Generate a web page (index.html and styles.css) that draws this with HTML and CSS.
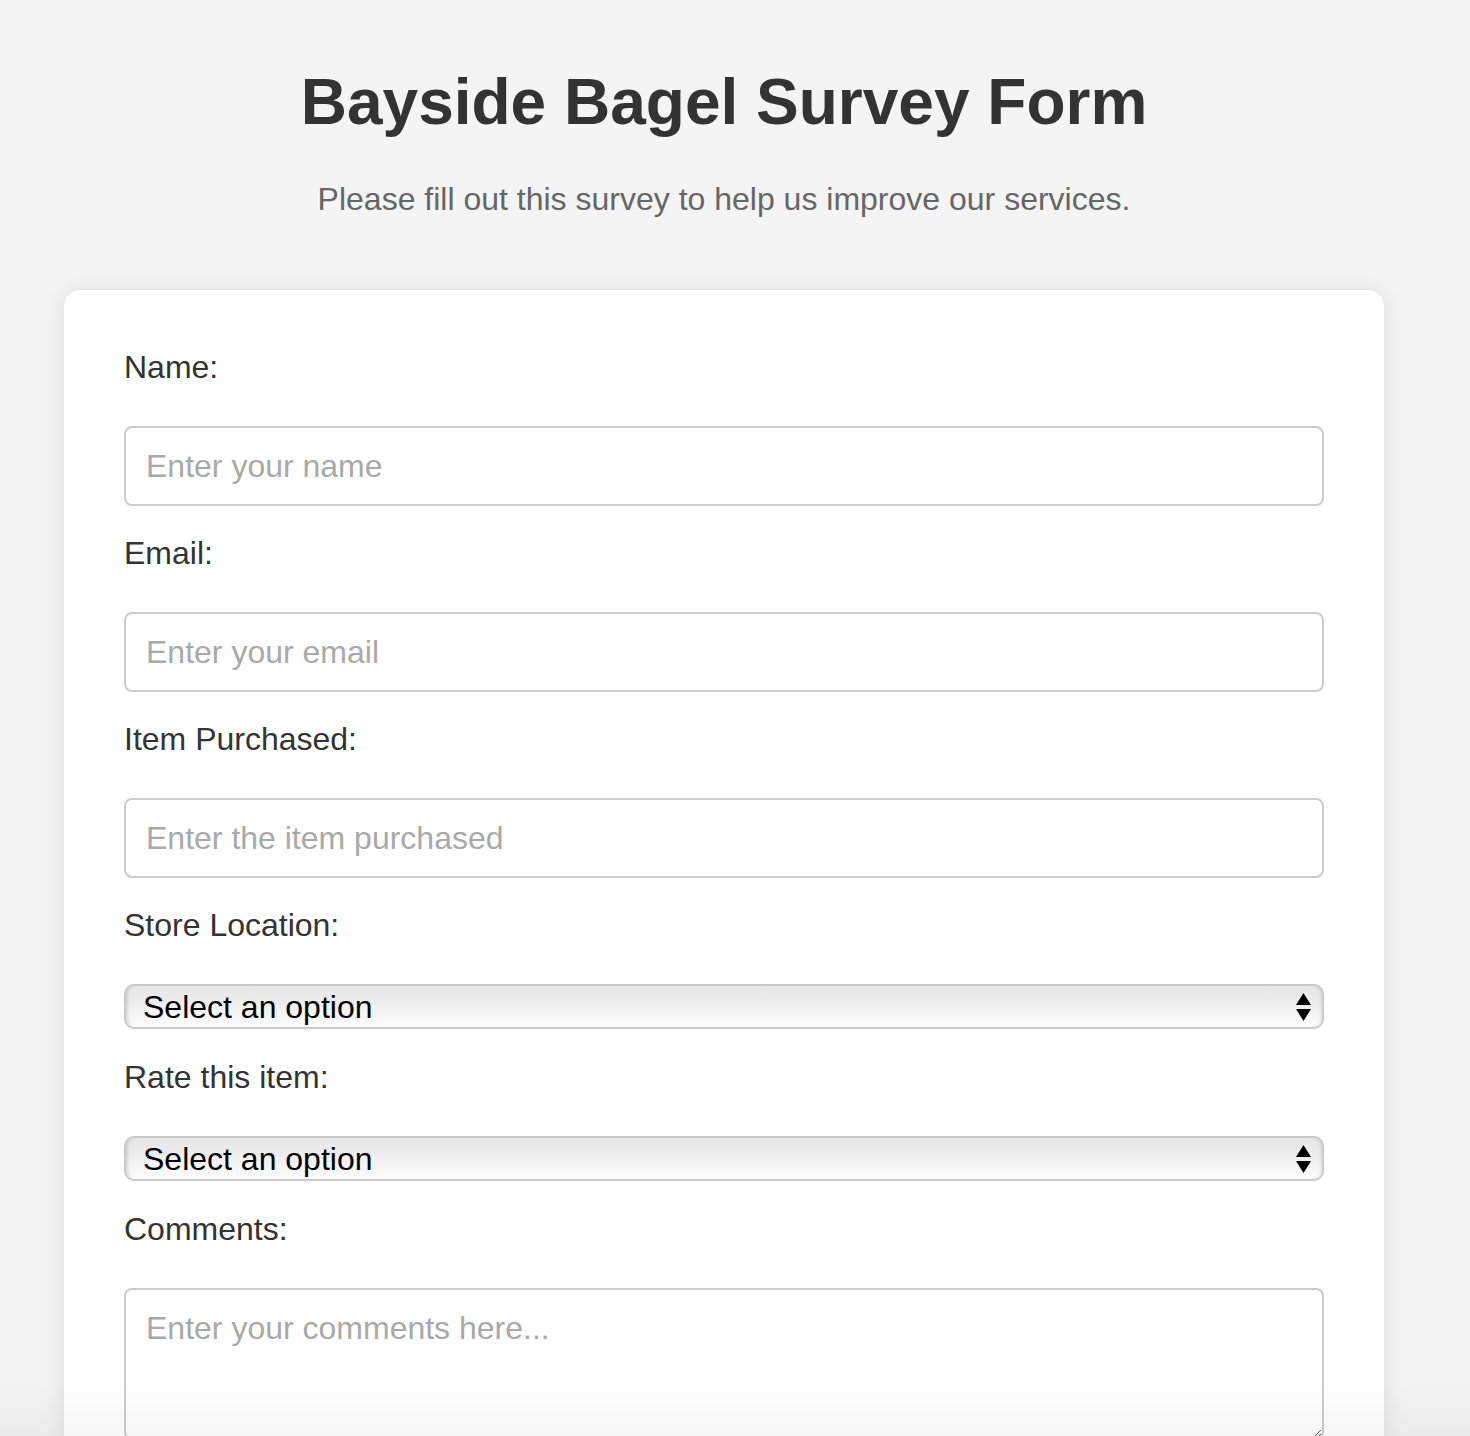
FILE: index.html
```html
<!DOCTYPE html>
<html lang="en">
<head>
<meta charset="utf-8">
<title>Bayside Bagel Survey Form</title>
<link rel="stylesheet" href="styles.css">
</head>
<body>
<div class="page">
  <h1 class="title">Bayside Bagel Survey Form</h1>
  <p class="subtitle">Please fill out this survey to help us improve our services.</p>
  <form class="card">
    <label class="label" for="name">Name:</label>
    <input class="field" id="name" type="text" placeholder="Enter your name">

    <label class="label" for="email">Email:</label>
    <input class="field" id="email" type="email" placeholder="Enter your email">

    <label class="label" for="item">Item Purchased:</label>
    <input class="field" id="item" type="text" placeholder="Enter the item purchased">

    <label class="label" for="store">Store Location:</label>
    <div class="select-wrap">
      <select class="select" id="store">
        <option>Select an option</option>
      </select>
      <svg class="arrows" width="15" height="28" viewBox="0 0 15 28"><polygon points="7.5,0 15,12 0,12" fill="#000"/><polygon points="0,16 15,16 7.5,28" fill="#000"/></svg>
    </div>

    <label class="label" for="rate">Rate this item:</label>
    <div class="select-wrap">
      <select class="select" id="rate">
        <option>Select an option</option>
      </select>
      <svg class="arrows" width="15" height="28" viewBox="0 0 15 28"><polygon points="7.5,0 15,12 0,12" fill="#000"/><polygon points="0,16 15,16 7.5,28" fill="#000"/></svg>
    </div>

    <label class="label" for="comments">Comments:</label>
    <textarea class="area" id="comments" placeholder="Enter your comments here..."></textarea>
  </form>
</div>
<div class="fade"></div>
</body>
</html>
```

FILE: styles.css
```css
html, body {
  margin: 0;
  padding: 0;
  background: #f4f4f4;
  font-family: "Liberation Sans", Arial, Helvetica, sans-serif;
  color: #333;
}

.page {
  padding: 65px 86px 40px 64px;
}

.title {
  margin: 0;
  font-size: 64px;
  font-weight: bold;
  text-align: center;
  color: #333;
  line-height: normal;
}

.subtitle {
  margin: 42px 0 0;
  font-size: 32px;
  text-align: center;
  color: #666;
  line-height: normal;
}

.card {
  margin-top: 72px;
  background: #fff;
  border-radius: 16px;
  box-shadow: 0 0 20px rgba(0, 0, 0, 0.1);
  padding: 59px 60px 60px;
  display: flex;
  flex-direction: column;
}

.label {
  display: block;
  font-size: 32px;
  line-height: 37px;
  color: #333;
  margin-bottom: 40px;
}

.field {
  box-sizing: border-box;
  height: 80px;
  width: 100%;
  margin: 0 0 29px;
  padding: 0 20px;
  border: 2px solid #ccc;
  border-radius: 8px;
  font-family: inherit;
  font-size: 32px;
  color: #333;
  background: #fff;
  outline: none;
}

.field::placeholder,
.area::placeholder {
  color: #a9a9a9;
}

.select-wrap {
  position: relative;
  margin-bottom: 30px;
}

.select {
  -webkit-appearance: none;
  appearance: none;
  box-sizing: border-box;
  display: block;
  width: 100%;
  height: 45px;
  padding: 0 50px 0 17px;
  border: 2px solid #cacaca;
  border-radius: 10px;
  font-family: inherit;
  font-size: 32px;
  color: #000;
  background: linear-gradient(to bottom, #e7e7e7 0%, #ececec 35%, #f6f6f6 70%, #fcfcfc 100%);
  box-shadow: inset 4px 0 4px -3px rgba(0, 0, 0, 0.18), inset -4px 0 4px -3px rgba(0, 0, 0, 0.12);
  outline: none;
}

.arrows {
  position: absolute;
  right: 13px;
  top: 9px;
  pointer-events: none;
}

.area {
  box-sizing: border-box;
  width: 100%;
  height: 152px;
  padding: 20px;
  border: 2px solid #ccc;
  border-radius: 8px;
  font-family: inherit;
  font-size: 32px;
  line-height: normal;
  color: #333;
  background: #fff;
  outline: none;
  resize: vertical;
}

.fade {
  position: fixed;
  left: 0;
  right: 0;
  bottom: 0;
  height: 56px;
  background: linear-gradient(to bottom, rgba(0, 0, 0, 0), rgba(0, 0, 0, 0.035));
  pointer-events: none;
}
```
